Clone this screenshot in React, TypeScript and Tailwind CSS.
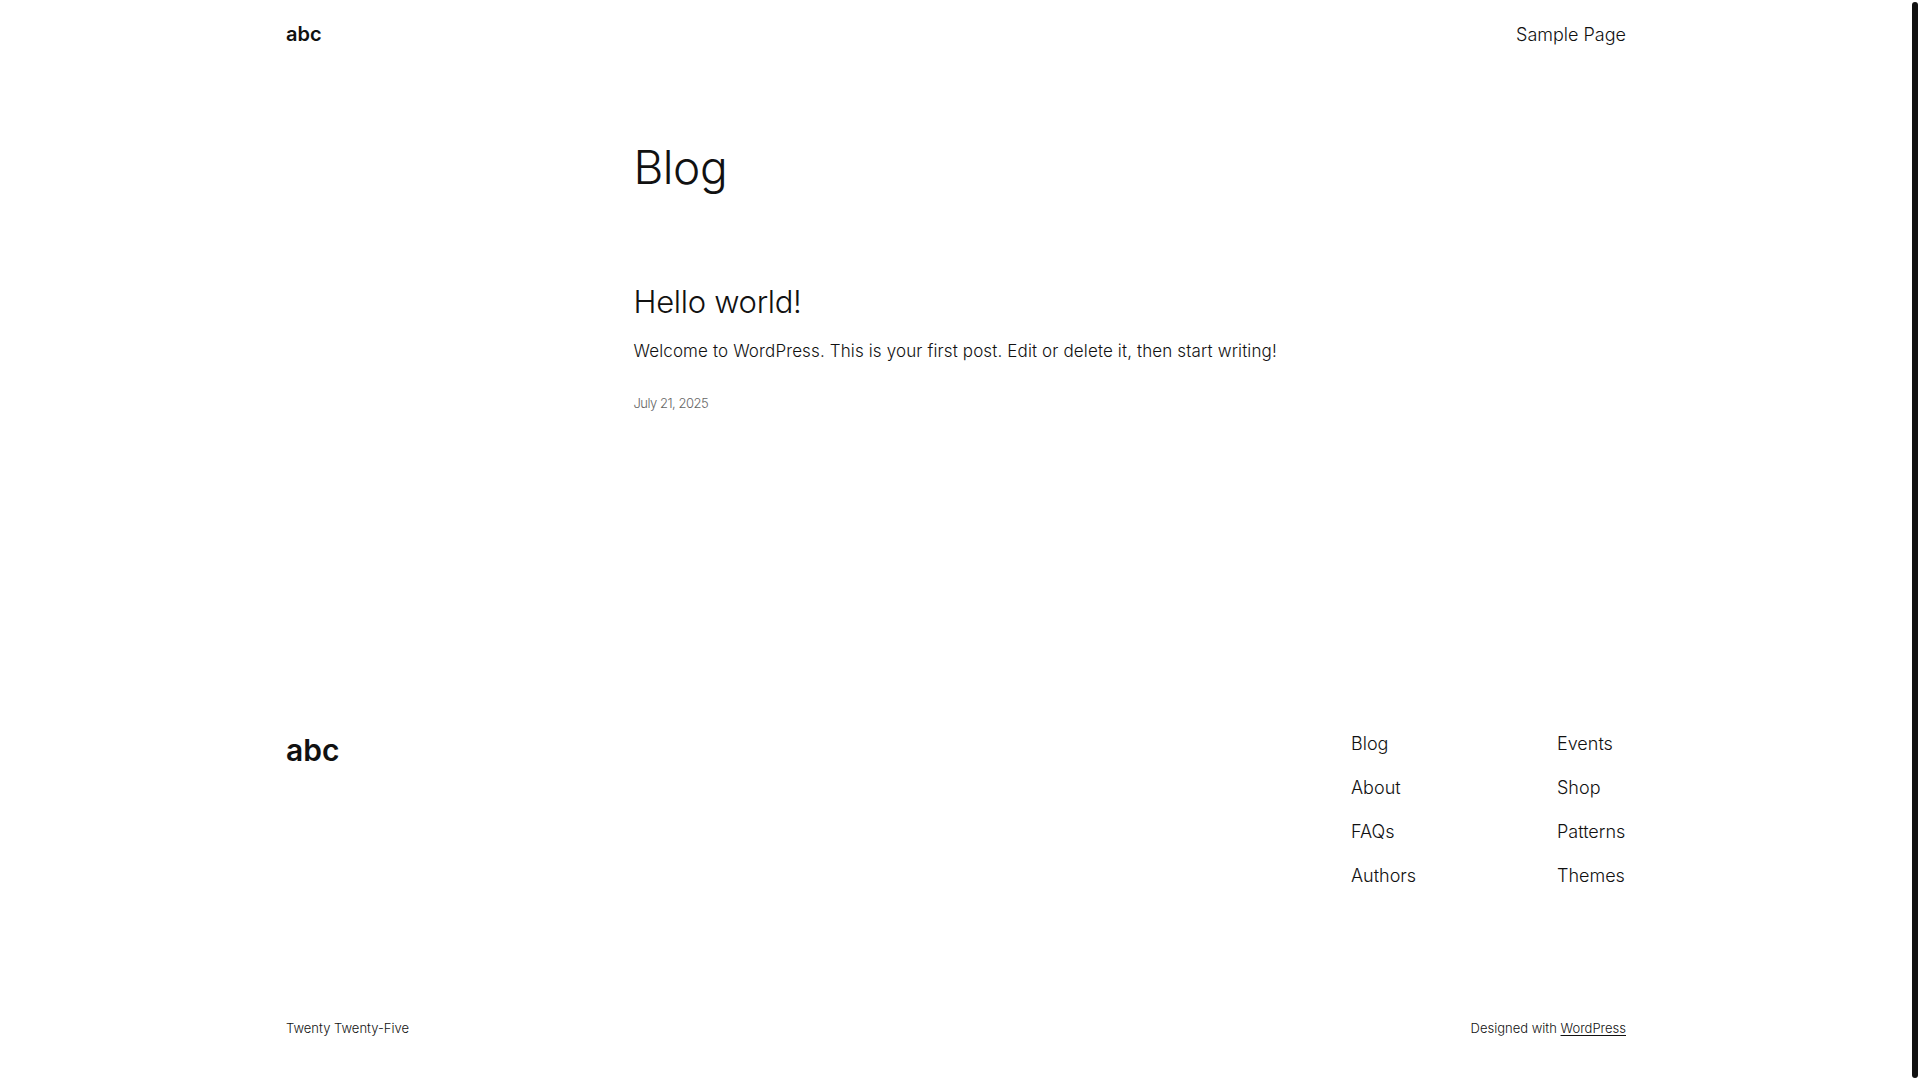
const font = { fontFamily: 'Inter, "Noto Sans", sans-serif' };

const navLeft = ['Blog', 'About', 'FAQs', 'Authors'];
const navRight = ['Events', 'Shop', 'Patterns', 'Themes'];

export default function App() {
  return (
    <div className="flex h-screen w-full overflow-hidden bg-white text-[#111111]" style={font}>
      <main className="flex-1">
        <div className="mx-auto flex w-[1340px] flex-col">
          {/* Header */}
          <header className="flex items-baseline justify-between pt-[22px]">
            <a className="text-[20px] font-semibold leading-[24px]">abc</a>
            <a className="text-[18px] font-light leading-[24px]">Sample Page</a>
          </header>

          {/* Blog listing */}
          <section className="mx-auto mt-[97px] flex w-[645px] flex-col">
            <h1 className="text-[46px] font-light leading-[46px] tracking-[-0.5px]">Blog</h1>
            <h2 className="mt-[96px] text-[31px] font-light leading-[31px] tracking-[-0.3px]">Hello world!</h2>
            <p className="mt-[22px] whitespace-nowrap text-[17px] font-light leading-[24px] tracking-[0.13px]">
              Welcome to WordPress. This is your first post. Edit or delete it, then start writing!
            </p>
            <time className="mt-[30px] text-[13px] font-light leading-[20px] tracking-[-0.5px] text-[#666666]">
              July 21, 2025
            </time>
          </section>

          {/* Footer */}
          <footer className="mt-[309px] flex flex-col">
            <div className="flex items-start justify-between">
              <a className="mt-[12px] text-[30px] font-semibold leading-[32px]">abc</a>
              <nav className="grid w-[275px] grid-cols-[206px_1fr] text-[18px] font-light leading-[44px]">
                <ul className="flex flex-col">
                  {navLeft.map((l) => (
                    <li key={l}>{l}</li>
                  ))}
                </ul>
                <ul className="flex flex-col">
                  {navRight.map((l) => (
                    <li key={l}>{l}</li>
                  ))}
                </ul>
              </nav>
            </div>
            <div className="mt-[120px] flex items-baseline justify-between text-[13px] font-light leading-[20px]">
              <span>Twenty Twenty-Five</span>
              <span>
                Designed with <a className="underline underline-offset-2">WordPress</a>
              </span>
            </div>
          </footer>
        </div>
      </main>
      <div className="flex w-[8px] py-[2px] pr-[2px]">
        <div className="h-full w-[6px] rounded-full bg-[#111111]" />
      </div>
    </div>
  );
}
